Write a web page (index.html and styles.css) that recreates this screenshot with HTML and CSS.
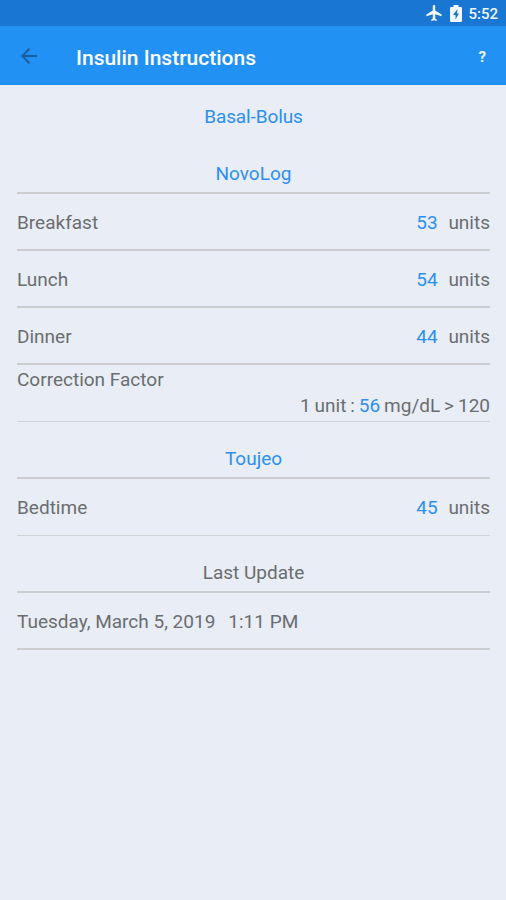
FILE: index.html
```html
<!DOCTYPE html>
<html lang="en">
<head>
    <meta charset="UTF-8">
    <meta name="viewport" content="width=device-width, initial-scale=1.0">
    <title>Insulin Instructions</title>
    <link rel="stylesheet" href="styles.css">
</head>
<body>

<div class="status-bar">
    <svg class="plane" viewBox="2 2 19 20" width="16" height="16">
        <path fill="currentColor" d="M21 16v-2l-8-5V3.500C13 2.670 12.330 2 11.500 2S10 2.670 10 3.500V9l-8 5v2l8-2.500V19l-2 1.500V22l3.500-1 3.500 1v-1.500L13 19v-5.500z"/>
    </svg>
    <svg class="battery" viewBox="0 0 12 17" width="12" height="17">
        <path fill="currentColor" fill-rule="evenodd" d="M3.500 0h5v2H11a1 1 0 0 1 1 1v13a1 1 0 0 1-1 1H1a1 1 0 0 1-1-1V3a1 1 0 0 1 1-1h2.500zM7.500 4L3 10h2.500v4.500L9 8.500H7z"/>
    </svg>
    <span class="clock">5:52</span>
</div>

<header class="toolbar">
    <svg class="back" viewBox="0 0 16 16" width="16" height="16">
        <path fill="none" stroke="currentColor" stroke-width="2" d="M16 8H1.500M8.500 .8L1.300 8l7.200 7.200"/>
    </svg>
    <h1>Insulin Instructions</h1>
    <span class="help">?</span>
</header>

<main class="content">
    <h2 class="plan">Basal-Bolus</h2>

    <h2 class="heading">NovoLog</h2>
    <div class="row">
        <span>Breakfast</span>
        <span class="dose"><b>53</b> units</span>
    </div>
    <div class="row">
        <span>Lunch</span>
        <span class="dose"><b>54</b> units</span>
    </div>
    <div class="row">
        <span>Dinner</span>
        <span class="dose"><b>44</b> units</span>
    </div>
    <div class="row correction">
        <span>Correction Factor</span>
        <span class="factor">1 unit : <b>56</b> mg/dL &gt; 120</span>
    </div>

    <h2 class="heading">Toujeo</h2>
    <div class="row last">
        <span>Bedtime</span>
        <span class="dose"><b>45</b> units</span>
    </div>

    <h2 class="heading update">Last Update</h2>
    <div class="row date">
        <span>Tuesday, March 5, 2019</span>
        <span>1:11 PM</span>
    </div>
</main>

</body>
</html>
```
FILE: styles.css
```css
* {
    box-sizing: border-box;
}
body {
    margin: 0;
    min-height: 100vh;
    font-family: Roboto, sans-serif;
    font-size: 19px;
    line-height: 24px;
    color: #6b6d70;
    background-color: #e9edf5;
}
.status-bar {
    display: flex;
    align-items: center;
    justify-content: flex-end;
    height: 26px;
    padding-right: 8px;
    color: #f2f8fe;
    background-color: #1976d2;
}
.battery {
    margin: 0 6px 0 8px;
}
.clock {
    padding-top: 2px;
    font-size: 15px;
    font-weight: 500;
}
.toolbar {
    display: flex;
    align-items: center;
    height: 59px;
    padding: 2px 20px 0 21px;
    color: white;
    background-color: #2291f4;
}
.back {
    margin: 0 39px 2px 0;
    color: #175e9f;
}
h1 {
    flex: 1;
    margin: 0;
    padding-top: 2px;
    font-size: 21px;
    font-weight: 500;
}
.help {
    font-size: 15px;
    font-weight: 700;
    color: #eaf4fe;
}
.content {
    padding: 0 16px 0 17px;
}
h2 {
    margin: 0;
    font-size: 19px;
    font-weight: 400;
    text-align: center;
    color: #2b90ef;
}
.plan {
    height: 52px;
    padding-top: 20px;
    letter-spacing: -0.1px;
}
.heading {
    height: 57px;
    padding-top: 25px;
    border-bottom: 2px solid #cbcdd1;
}
.row {
    display: flex;
    align-items: center;
    justify-content: space-between;
    height: 57px;
    padding-top: 2px;
    border-bottom: 2px solid #cbcdd1;
}
b {
    font-weight: 400;
    color: #2b90ef;
}
.dose b {
    margin-right: 6px;
}
.correction {
    flex-direction: column;
    align-items: stretch;
    justify-content: flex-start;
    gap: 2px;
    padding: 3px 0 0;
    border-bottom: 1px solid #d0d2d6;
}
.factor {
    text-align: right;
    word-spacing: -0.8px;
}
.last {
    border-bottom: 1px solid #d0d2d6;
}
.update {
    color: #6b6d70;
}
.date {
    justify-content: flex-start;
    gap: 13px;
}
```
